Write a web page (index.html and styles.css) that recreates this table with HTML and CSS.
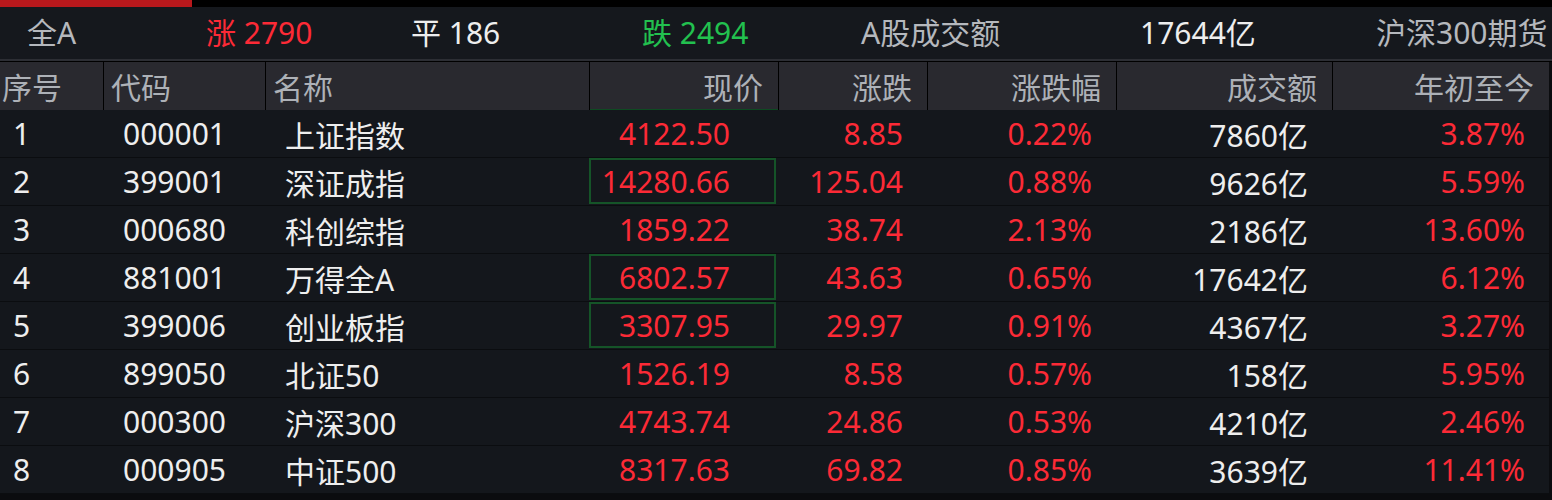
FILE: index.html
```html
<!DOCTYPE html>
<html lang="zh-CN">
<head>
<meta charset="utf-8">
<title>行情</title>
<link rel="stylesheet" href="styles.css">
</head>
<body>
<div class="app">
  <div class="strip"><div class="strip-bar"></div></div>
  <div class="summary">
    <span class="s-item muted">全A</span>
    <span class="s-item up">涨 2790</span>
    <span class="s-item white">平 186</span>
    <span class="s-item down">跌 2494</span>
    <span class="s-item muted">A股成交额</span>
    <span class="s-item white">17644亿</span>
    <span class="s-item muted">沪深300期货</span>
  </div>
  <div class="sep"></div>
  <div class="table">
    <div class="thead">
      <div class="th c-seq">序号</div>
      <div class="th c-code">代码</div>
      <div class="th c-name">名称</div>
      <div class="th c-num c-price sorted">现价</div>
      <div class="th c-num">涨跌</div>
      <div class="th c-num">涨跌幅</div>
      <div class="th c-num">成交额</div>
      <div class="th c-num">年初至今</div>
    </div>
    <div class="tr">
      <div class="td c-seq">1</div><div class="td c-code">000001</div><div class="td c-name">上证指数</div>
      <div class="td c-num c-price up">4122.50</div><div class="td c-num up">8.85</div><div class="td c-num up">0.22%</div>
      <div class="td c-num">7860亿</div><div class="td c-num up">3.87%</div>
    </div>
    <div class="tr">
      <div class="td c-seq">2</div><div class="td c-code">399001</div><div class="td c-name">深证成指</div>
      <div class="td c-num c-price up boxed">14280.66</div><div class="td c-num up">125.04</div><div class="td c-num up">0.88%</div>
      <div class="td c-num">9626亿</div><div class="td c-num up">5.59%</div>
    </div>
    <div class="tr">
      <div class="td c-seq">3</div><div class="td c-code">000680</div><div class="td c-name">科创综指</div>
      <div class="td c-num c-price up">1859.22</div><div class="td c-num up">38.74</div><div class="td c-num up">2.13%</div>
      <div class="td c-num">2186亿</div><div class="td c-num up">13.60%</div>
    </div>
    <div class="tr">
      <div class="td c-seq">4</div><div class="td c-code">881001</div><div class="td c-name">万得全A</div>
      <div class="td c-num c-price up boxed">6802.57</div><div class="td c-num up">43.63</div><div class="td c-num up">0.65%</div>
      <div class="td c-num">17642亿</div><div class="td c-num up">6.12%</div>
    </div>
    <div class="tr">
      <div class="td c-seq">5</div><div class="td c-code">399006</div><div class="td c-name">创业板指</div>
      <div class="td c-num c-price up boxed">3307.95</div><div class="td c-num up">29.97</div><div class="td c-num up">0.91%</div>
      <div class="td c-num">4367亿</div><div class="td c-num up">3.27%</div>
    </div>
    <div class="tr">
      <div class="td c-seq">6</div><div class="td c-code">899050</div><div class="td c-name">北证50</div>
      <div class="td c-num c-price up">1526.19</div><div class="td c-num up">8.58</div><div class="td c-num up">0.57%</div>
      <div class="td c-num">158亿</div><div class="td c-num up">5.95%</div>
    </div>
    <div class="tr">
      <div class="td c-seq">7</div><div class="td c-code">000300</div><div class="td c-name">沪深300</div>
      <div class="td c-num c-price up">4743.74</div><div class="td c-num up">24.86</div><div class="td c-num up">0.53%</div>
      <div class="td c-num">4210亿</div><div class="td c-num up">2.46%</div>
    </div>
    <div class="tr">
      <div class="td c-seq">8</div><div class="td c-code">000905</div><div class="td c-name">中证500</div>
      <div class="td c-num c-price up">8317.63</div><div class="td c-num up">69.82</div><div class="td c-num up">0.85%</div>
      <div class="td c-num">3639亿</div><div class="td c-num up">11.41%</div>
    </div>
  </div>
</div>
</body>
</html>
```

FILE: styles.css
```css
html, body {
  margin: 0;
  padding: 0;
  background: #0b0c0f;
}
body {
  font-family: "Noto Sans", "Noto Sans CJK SC", sans-serif;
  font-size: 30px;
  color: #eeeeee;
  width: 1552px;
  height: 500px;
  overflow: hidden;
}
.app {
  width: 1552px;
}
.strip {
  height: 7px;
  background: #000;
}
.strip-bar {
  width: 192px;
  height: 7px;
  background: #b8181c;
}
.summary {
  display: grid;
  grid-template-columns: 179px 205px 231px 219px 279px 236px auto;
  align-items: center;
  height: 52px;
  padding-left: 27px;
  background: #15181d;
  border-bottom: 2px solid #2c2e34;
  line-height: 1;
  white-space: nowrap;
}
.sep {
  height: 1px;
  background: #000;
}
.muted { color: #b5b8bd; }
.white { color: #eeeeee; }
.up { color: #fc2a36; }
.down { color: #22c14f; }

.table {
  width: 1549px;
}
.thead, .tr {
  display: grid;
  grid-template-columns: 103px 162px 324px 189px 149px 189px 216px 217px;
}
.thead {
  height: 48px;
  background: #29292f;
}
.th {
  display: flex;
  align-items: center;
  color: #adb1b7;
  border-left: 1px solid #000;
  padding: 0 15px 0 7px;
  position: relative;
}
.th.c-seq {
  border-left: none;
  padding-left: 2px;
}
.th.c-num {
  justify-content: flex-end;
}
.th.sorted::after {
  content: "";
  position: absolute;
  left: 0;
  right: 0;
  bottom: 0;
  height: 1px;
  background: #0e4a22;
}
.tr {
  height: 47px;
  background: #14171c;
  border-bottom: 1px solid #0b0d10;
}
.td {
  display: flex;
  align-items: center;
  padding: 0 24px 0 20px;
  position: relative;
  white-space: nowrap;
}
.td.c-seq {
  padding-left: 13px;
}
.td.c-num {
  justify-content: flex-end;
}
.td.c-price {
  padding-right: 48px;
}
.td.boxed::before {
  content: "";
  position: absolute;
  left: 0;
  top: 0;
  width: 187px;
  height: 46px;
  box-sizing: border-box;
  border: 2px solid #155428;
}
```
